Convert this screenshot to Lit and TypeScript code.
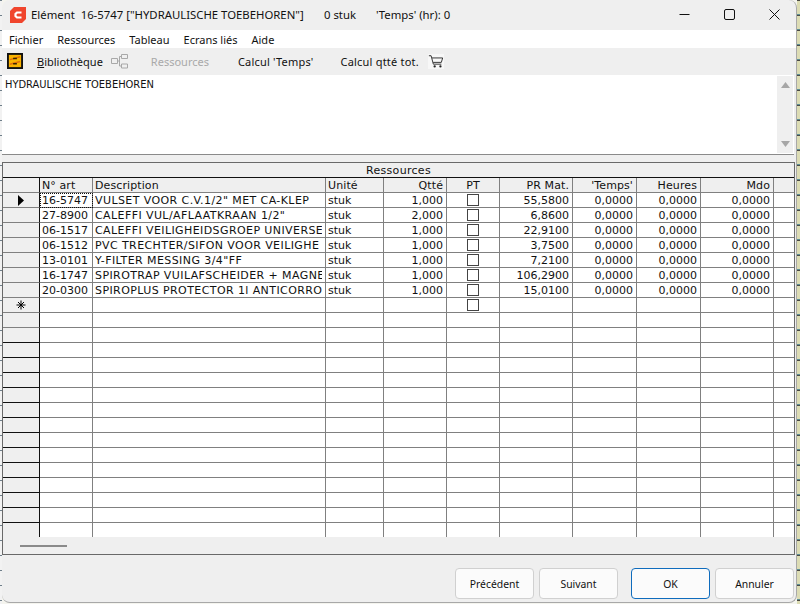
import { LitElement, html, css, svg } from "lit";
import { customElement } from "lit/decorators.js";

type Row = [string, string, string, string, string];

const ROWS: Row[] = [
  ["16-5747", 'VULSET VOOR C.V.1/2" MET CA-KLEP', "stuk", "1,000", "55,5800"],
  ["27-8900", 'CALEFFI VUL/AFLAATKRAAN 1/2"', "stuk", "2,000", "6,8600"],
  ["06-1517", "CALEFFI VEILIGHEIDSGROEP UNIVERSE", "stuk", "1,000", "22,9100"],
  ["06-1512", "PVC TRECHTER/SIFON VOOR VEILIGHE", "stuk", "1,000", "3,7500"],
  ["13-0101", 'Y-FILTER MESSING 3/4"FF', "stuk", "1,000", "7,2100"],
  ["16-1747", "SPIROTRAP VUILAFSCHEIDER + MAGNE", "stuk", "1,000", "106,2900"],
  ["20-0300", "SPIROPLUS PROTECTOR 1l ANTICORRO", "stuk", "1,000", "15,0100"],
];
const EMPTY_ROWS = 16;
const ZERO = "0,0000";

@customElement("app-root")
export class AppRoot extends LitElement {
  static styles = css`
    :host {
      display: block;
      width: 800px;
      height: 604px;
      overflow: hidden;
      background-color: #f4f4ee;
      background-image:
        repeating-linear-gradient(to bottom, #6f7f8a 0 1px, #f2f2f2 1px 15px),
        repeating-linear-gradient(to bottom, #4a4a44 0 1px, #dcdcb4 1px 14px, #5f8f94 14px 15px);
      background-size: 2px 100%, 3px 100%;
      background-position: left top, right top;
      background-repeat: no-repeat;
    }
    .window {
      box-sizing: border-box;
      margin-left: 2px;
      width: 795px;
      height: 603px;
      display: flex;
      flex-direction: column;
      background: #efefef;
      border-right: 1px solid #a8a8a8;
      border-bottom: 1px solid #a8a8a8;
      border-radius: 8px;
      overflow: hidden;
      font-family: "Noto Sans", "Open Sans", sans-serif;
      font-size: 11px;
      color: #111;
    }
    .titlebar {
      height: 30px;
      flex: none;
      display: flex;
      align-items: center;
      padding: 0 0 1px 8px;
      box-sizing: border-box;
    }
    .logo { width: 16px; height: 16px; margin-right: 5px; }
    .title { white-space: pre; width: 293px; font-size: 11.35px; }
    .title2 { white-space: pre; width: 52px; font-size: 11.35px; }
    .title3 { white-space: pre; font-size: 11.35px; }
    .winbtns { margin-left: auto; margin-right: -1px; display: flex; }
    .winbtn { width: 45px; height: 29px; display: flex; align-items: center; justify-content: center; }
    .menu {
      height: 18px;
      flex: none;
      background: #fff;
      display: flex;
      align-items: center;
      gap: 14px;
      padding-left: 7px;
    }
    .toolbar {
      height: 27px;
      flex: none;
      box-sizing: border-box;
      display: flex;
      align-items: center;
      padding: 0 0 1px 5px;
    }
    .tb-icon { width: 16px; height: 16px; }
    .tb-biblio { margin-left: 14px; }
    .tb-biblio u { text-underline-offset: 1px; }
    .tb-net { margin-left: 8px; width: 17px; height: 16px; }
    .tb-res { margin-left: 23px; color: #a9a9a9; }
    .tb-calc { margin-left: 29px; letter-spacing: 0.2px; }
    .tb-qty { margin-left: 27px; letter-spacing: 0.2px; }
    .tb-cart { margin-left: 9px; width: 16px; height: 15px; background: #f7f7f7; }
    .memo {
      height: 80px;
      flex: none;
      margin-right: 2px;
      display: flex;
      background: #fff;
      border-bottom: 1px solid #8a8a8a;
      box-sizing: border-box;
      font: 11px "DejaVu Sans Condensed", "DejaVu Sans", sans-serif;
    }
    .memo-text { flex: 1; padding: 3px 0 0 3px; }
    .memo-bar {
      width: 16px;
      margin: 1px 1px 1px 0;
      background: #efefef;
      display: flex;
      flex-direction: column;
      justify-content: space-between;
      align-items: center;
      padding: 6px 0;
      box-sizing: border-box;
    }
    .panel {
      margin: 7px 1px 0 0;
      height: 393px;
      flex: none;
      box-sizing: border-box;
      border: 1px solid #696969;
      display: flex;
      flex-direction: column;
      font: 11px "DejaVu Sans", sans-serif;
    }
    .caption {
      height: 14px;
      flex: none;
      line-height: 15px;
      text-align: center;
      letter-spacing: 0.3px;
      background: #efefef;
    }
    .grid {
      height: 360px;
      flex: none;
      overflow: hidden;
      background: #fff;
      border-top: 1px solid #111;
      box-sizing: border-box;
      display: grid;
      grid-template-columns: 37px 53px 233px 58px 63px 53px 73px 64px 64px 73px 1fr;
      grid-auto-rows: 15px;
    }
    .c {
      box-sizing: border-box;
      height: 15px;
      line-height: 15px;
      border-right: 1px solid #808080;
      border-bottom: 1px solid #808080;
      padding: 0 2px;
      white-space: nowrap;
      overflow: hidden;
    }
    .head { background: #efefef; letter-spacing: 0.1px; }
    .sel { background: #efefef; border-right-color: #111; display: flex; align-items: center; justify-content: center; }
    .sel.dark { border-bottom-color: #111; }
    .r { text-align: right; padding-right: 3px; }
    .ctr { text-align: center; }
    .last { border-right: 0; }
    .current { outline: 1px dotted #111; outline-offset: -1px; }
    .desc { letter-spacing: 0.41px; padding-right: 3px; }
    .desc span { display: block; overflow: hidden; }
    .check { display: flex; align-items: center; justify-content: center; }
    .box { width: 10px; height: 10px; border: 1px solid #444; background: #fff; }
    .hscroll {
      flex: 1;
      background: #efefef;
      display: flex;
      align-items: center;
      padding-left: 17px;
    }
    .thumb { width: 47px; height: 2px; background: #8a8a8a; }
    .footer {
      flex: 1;
      display: flex;
      justify-content: flex-end;
      padding: 13px 2px 0 0;
    }
    .btn {
      box-sizing: border-box;
      width: 79px;
      height: 31px;
      margin-left: 5px;
      border: 1px solid #d0d0d0;
      border-radius: 4px;
      background: #fbfbfb;
      font: 10.4px "Noto Sans", "Open Sans", sans-serif;
      color: #111;
      padding: 0;
    }
    .btn.ok { margin-left: 13px; border-color: #0f6cbd; }
  `;

  private cells(row: Row, i: number) {
    return html`
      <div class="c sel">${i === 0 ? html`<svg width="8" height="11" viewBox="0 0 8 11"><path d="M1 0l6 5.5-6 5.5z" fill="#000"/></svg>` : null}</div>
      <div class="c ${i === 0 ? "current" : ""}">${row[0]}</div>
      <div class="c desc"><span>${row[1]}</span></div>
      <div class="c">${row[2]}</div>
      <div class="c r">${row[3]}</div>
      <div class="c check"><span class="box"></span></div>
      <div class="c r">${row[4]}</div>
      <div class="c r">${ZERO}</div>
      <div class="c r">${ZERO}</div>
      <div class="c r">${ZERO}</div>
      <div class="c last"></div>
    `;
  }

  private emptyRow(i: number) {
    return html`
      <div class="c sel ${i >= 2 ? "dark" : ""}">${i === 0 ? html`<svg width="10" height="10" viewBox="0 0 10 10"><path d="M5 .5v9M.5 5h9M2 2l6 6M8 2l-6 6" stroke="#000" stroke-width="1" fill="none"/></svg>` : null}</div>
      <div class="c"></div><div class="c"></div><div class="c"></div><div class="c"></div>
      <div class="c check">${i === 0 ? html`<span class="box"></span>` : null}</div>
      <div class="c"></div><div class="c"></div><div class="c"></div><div class="c"></div>
      <div class="c last"></div>
    `;
  }

  render() {
    const netIcon = svg`<path d="M.5 5.5h6v5h-6zM10.5 1.5h6v4h-6zM10.5 11h6v4h-6zM6.5 8h2M8.5 3.5v9.5M8.5 3.5h2M8.5 13h2" fill="none" stroke="#a8a8a8"/>`;
    return html`
      <div class="window">
        <div class="titlebar">
          <svg class="logo" viewBox="0 0 16 16">
            <path d="M4 0h12v12l-4 4H0V4z" fill="#f0452d"/>
            <path d="M11.5 5.5H7L5.5 7v2L7 10.5h4.5" fill="none" stroke="#fff" stroke-width="2.2"/>
          </svg>
          <span class="title">Elément  16-5747 ["HYDRAULISCHE TOEBEHOREN"]</span>
          <span class="title2">0 stuk</span>
          <span class="title3">'Temps' (hr): 0</span>
          <div class="winbtns">
            <div class="winbtn"><svg width="11" height="11" viewBox="0 0 11 11"><path d="M.5 5.5h10" stroke="#111"/></svg></div>
            <div class="winbtn"><svg width="11" height="11" viewBox="0 0 11 11"><rect x=".5" y=".5" width="10" height="10" rx="1.5" fill="none" stroke="#111"/></svg></div>
            <div class="winbtn"><svg width="11" height="11" viewBox="0 0 11 11"><path d="M.5.5l10 10M10.5.5l-10 10" stroke="#111"/></svg></div>
          </div>
        </div>
        <div class="menu">
          <span>Fichier</span><span>Ressources</span><span>Tableau</span><span>Ecrans liés</span><span>Aide</span>
        </div>
        <div class="toolbar">
          <svg class="tb-icon" viewBox="0 0 17 17">
            <rect x="1" y="1" width="15" height="15" fill="#f9b400" stroke="#111" stroke-width="2"/>
            <path d="M3 7l11-3M3 12l11-3" stroke="#e2700a" stroke-width="1.5"/>
            <path d="M6.5 5h4v1.6h-4zM6.5 10.5h4v1.6h-4z" fill="#3a2500"/>
          </svg>
          <span class="tb-biblio"><u>B</u>ibliothèque</span>
          <svg class="tb-net" viewBox="0 0 17 16">${netIcon}</svg>
          <span class="tb-res">Ressources</span>
          <span class="tb-calc">Calcul 'Temps'</span>
          <span class="tb-qty">Calcul qtté tot.</span>
          <svg class="tb-cart" viewBox="0 0 18 16">
            <path d="M1 1.5h2.5l2.5 9.5h9M4.5 4h12l-1.5 5H5.8" fill="none" stroke="#222"/>
            <circle cx="7.5" cy="13.5" r="1.3" fill="#222"/><circle cx="14" cy="13.5" r="1.3" fill="#222"/>
          </svg>
        </div>
        <div class="memo">
          <div class="memo-text">HYDRAULISCHE TOEBEHOREN</div>
          <div class="memo-bar">
            <svg width="9" height="6" viewBox="0 0 9 6"><path d="M4.5 0l4.5 6H0z" fill="#a6a6a6"/></svg>
            <svg width="9" height="6" viewBox="0 0 9 6"><path d="M0 0h9L4.5 6z" fill="#a6a6a6"/></svg>
          </div>
        </div>
        <div class="panel">
          <div class="caption">Ressources</div>
          <div class="grid">
            <div class="c head sel"></div>
            <div class="c head">N° art</div>
            <div class="c head">Description</div>
            <div class="c head">Unité</div>
            <div class="c head r">Qtté</div>
            <div class="c head ctr">PT</div>
            <div class="c head r">PR Mat.</div>
            <div class="c head r">'Temps'</div>
            <div class="c head r">Heures</div>
            <div class="c head r">Mdo</div>
            <div class="c head last"></div>
            ${ROWS.map((r, i) => this.cells(r, i))}
            ${Array.from({ length: EMPTY_ROWS }, (_, i) => this.emptyRow(i))}
          </div>
          <div class="hscroll"><div class="thumb"></div></div>
        </div>
        <div class="footer">
          <button class="btn">Précédent</button>
          <button class="btn">Suivant</button>
          <button class="btn ok">OK</button>
          <button class="btn">Annuler</button>
        </div>
      </div>
    `;
  }
}
